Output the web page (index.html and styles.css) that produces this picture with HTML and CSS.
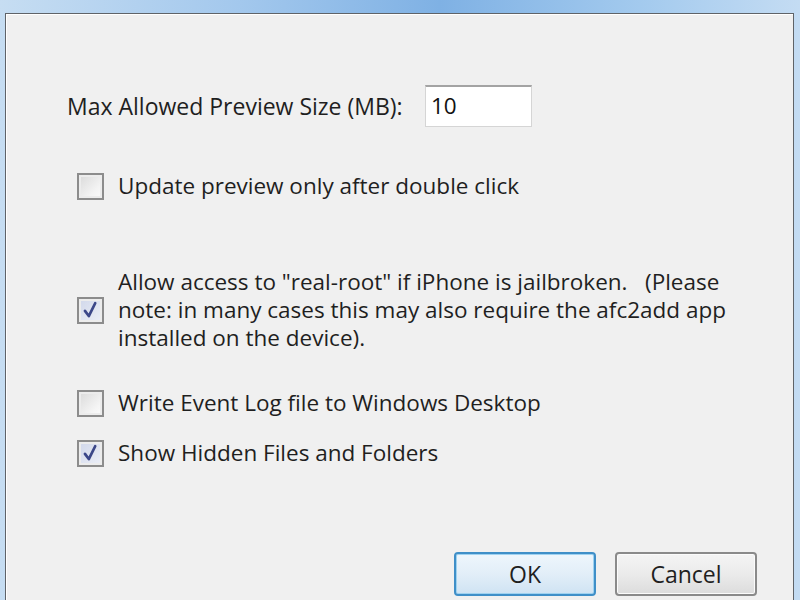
FILE: index.html
```html
<!DOCTYPE html>
<html>
<head>
<meta charset="utf-8">
<link rel="stylesheet" href="styles.css">
</head>
<body>
<div class="frame">
  <div class="dialog">
    <div class="content">
      <div class="row size-row">
        <span class="label">Max Allowed Preview Size (MB):</span>
        <div class="input">10</div>
      </div>
      <div class="row check-row r1">
        <span class="box"></span>
        <span class="text">Update preview only after double click</span>
      </div>
      <div class="row check-row r2">
        <span class="box checked"><svg viewBox="0 0 27 27" width="25" height="25"><path d="M7 14 L11.5 20 L19 5" fill="none" stroke="#3b4789" stroke-width="3.2" stroke-linecap="round" stroke-linejoin="round"/></svg></span>
        <span class="text"><span class="line">Allow access to "real-root" if iPhone is jailbroken.&nbsp;&nbsp; (Please</span><span class="line">note: in many cases this may also require the afc2add app</span><span class="line">installed on the device).</span></span>
      </div>
      <div class="row check-row r3">
        <span class="box"></span>
        <span class="text">Write Event Log file to Windows Desktop</span>
      </div>
      <div class="row check-row r4">
        <span class="box checked"><svg viewBox="0 0 27 27" width="25" height="25"><path d="M7 14 L11.5 20 L19 5" fill="none" stroke="#3b4789" stroke-width="3.2" stroke-linecap="round" stroke-linejoin="round"/></svg></span>
        <span class="text">Show Hidden Files and Folders</span>
      </div>
      <div class="buttons">
        <button class="btn ok">OK</button>
        <button class="btn cancel">Cancel</button>
      </div>
    </div>
  </div>
</div>
</body>
</html>
```

FILE: styles.css
```css
html, body {
  margin: 0;
  padding: 0;
  width: 800px;
  height: 600px;
  overflow: hidden;
}
body {
  background: linear-gradient(90deg, #c6ddf2 0%, #a3c8ed 30%, #7fb1e4 55%, #a3caee 80%, #c4dcf3 100%);
  font-family: "Open Sans", "Noto Sans", sans-serif;
  color: #1f1f1f;
}
.frame {
  padding: 13px 6px 0 5px;
  height: 587px;
}
.dialog {
  height: 100%;
  border: 1px solid #5f6368;
  border-bottom: none;
  background: #f0f0f0;
  box-shadow: inset 1px 1px 0 #ffffff;
  box-sizing: border-box;
}
.content {
  padding: 71px 0 0 61px;
  display: flex;
  flex-direction: column;
  font-size: 22.5px;
}
.row {
  display: flex;
  align-items: center;
}
.size-row {
  height: 42px;
}
.label {
  width: 358px;
  font-size: 23px;
}
.input {
  width: 107px;
  height: 42px;
  background: #fff;
  border: 1px solid #d5d5d5;
  border-top: 2px solid #a3a3a3;
  box-sizing: border-box;
  padding-left: 5px;
  line-height: 38px;
  color: #111;
}
.check-row {
  padding-left: 10px;
  line-height: 28px;
}
.text {
  display: flex;
  flex-direction: column;
}
.line {
  display: block;
  height: 28px;
  line-height: 28px;
}
.r1 { margin-top: 45px; }
.r2 { margin-top: 68px; }
.r3 { margin-top: 37px; }
.r4 { margin-top: 22px; }
.box {
  width: 27px;
  height: 27px;
  box-sizing: border-box;
  border: 2px solid #8c8c8c;
  background: linear-gradient(135deg, #d9d9d9 0%, #f4f4f4 70%, #fbfbfb 100%);
  box-shadow: inset 0 0 0 2px #ececec;
  margin-right: 14px;
  flex: none;
  display: flex;
  align-items: center;
  justify-content: center;
}
.box.checked {
  background: linear-gradient(135deg, #d0d7ea 0%, #eceff7 100%);
}
.buttons {
  display: flex;
  gap: 19px;
  margin-top: 85px;
  padding-left: 387px;
}
.btn {
  width: 142px;
  height: 44px;
  border-radius: 4px;
  font-family: "Open Sans", "Noto Sans", sans-serif;
  font-size: 23px;
  color: #1f1f1f;
  padding: 0;
  box-sizing: border-box;
}
.ok {
  border: 2px solid #3f8fc8;
  background: linear-gradient(180deg, #eef6fc 0%, #e2eef8 50%, #cfe3f3 100%);
  box-shadow: inset 0 0 0 1px #9fd2f0;
}
.cancel {
  border: 2px solid #8a8a8a;
  background: linear-gradient(180deg, #f4f4f4 0%, #ebebeb 50%, #dcdcdc 100%);
  box-shadow: inset 0 0 0 1px #fbfbfb;
}
```
